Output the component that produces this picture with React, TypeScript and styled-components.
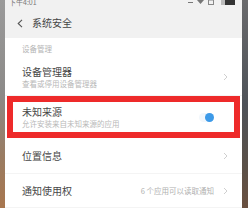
import React from "react";
import styled, { createGlobalStyle } from "styled-components";

const Global = createGlobalStyle`
  html, body { margin: 0; padding: 0; }
  body { font-family: "Noto Sans CJK SC", "Noto Sans", sans-serif; background: #fff; }
`;

const Frame = styled.div`
  display: flex;
  width: 248px;
  height: 208px;
  overflow: hidden;
`;

const LeftEdge = styled.div`
  width: 5px;
  flex: none;
  background: linear-gradient(180deg, #9a9a9a 0%, #8c8a88 45%, #9a7c62 75%, #a8764e 100%);
`;

const RightEdge = styled.div`
  width: 6px;
  flex: none;
  background: linear-gradient(180deg, #6a6a6c 0%, #4e5258 50%, #5a5048 80%, #6a5040 100%);
`;

const Screen = styled.div`
  flex: 1;
  display: flex;
  flex-direction: column;
  background: #fff;
  overflow: hidden;
`;

const StatusBar = styled.div`
  height: 8px;
  flex: none;
  display: flex;
  justify-content: space-between;
  align-items: flex-start;
  padding: 0 6px 0 4px;
  background: #f1f1f1;
  overflow: hidden;
`;

const StatusTime = styled.span`
  font-size: 7px;
  line-height: 8px;
  margin-top: -2px;
  color: #777;
`;

const Header = styled.div`
  height: 30px;
  flex: none;
  display: flex;
  align-items: center;
  gap: 9px;
  padding-left: 12px;
  background: #f1f1f1;
`;

const Title = styled.span`
  font-size: 10px;
  color: #444;
  line-height: 12px;
`;

const SectionLabel = styled.div`
  height: 24px;
  box-sizing: border-box;
  padding: 5px 0 0 17px;
  font-size: 7.5px;
  line-height: 12px;
  color: #b4b4b4;
`;

const Row = styled.div<{ $h: number; $boxed?: boolean }>`
  height: ${(p) => p.$h}px;
  flex: none;
  box-sizing: border-box;
  display: flex;
  align-items: center;
  padding: ${(p) => (p.$boxed ? "0 20px 0 9px" : "0 14px 0 17px")};
  margin: ${(p) => (p.$boxed ? "0 2px" : "0")};
  border: ${(p) => (p.$boxed ? "6px solid #ee2a2a" : "none")};
  border-bottom: ${(p) => (p.$boxed ? "6px solid #ee2a2a" : "1px solid #f4f4f4")};
`;

const Texts = styled.div`
  flex: 1;
  display: flex;
  flex-direction: column;
`;

const RowTitle = styled.span`
  font-size: 10px;
  line-height: 13px;
  color: #474747;
`;

const RowSub = styled.span`
  font-size: 7.5px;
  line-height: 11px;
  color: #b8b8b8;
  white-space: nowrap;
`;

const RowValue = styled.span`
  font-size: 7.5px;
  color: #b0b0b0;
  margin-right: 9px;
  white-space: nowrap;
`;

const Toggle = styled.div`
  width: 15px;
  height: 9px;
  border-radius: 5px;
  background: #f2f7fc;
  display: flex;
  justify-content: flex-end;
  align-items: center;
`;

const Knob = styled.div`
  width: 9px;
  height: 9px;
  border-radius: 50%;
  background: #3d9ae8;
`;

const Chevron = () => (
  <svg width="5" height="8" viewBox="0 0 5 8">
    <path d="M1 1 L4 4 L1 7" fill="none" stroke="#cfcfcf" strokeWidth="1" />
  </svg>
);

const Back = () => (
  <svg width="6" height="9" viewBox="0 0 6 9">
    <path d="M5 0.8 L1.2 4.5 L5 8.2" fill="none" stroke="#555" strokeWidth="1.1" />
  </svg>
);

const StatusIcons = () => (
  <svg width="48" height="6" viewBox="0 0 48 6">
    <rect x="0" y="2" width="5" height="1" fill="#777" />
    <path d="M9 0 L16 0 L12.5 4 Z" fill="#777" />
    <rect x="20.5" y="0" width="5" height="4.5" fill="none" stroke="#888" strokeWidth="1" />
    <rect x="33" y="0" width="4" height="5" fill="#bbb" />
    <rect x="37" y="0" width="10" height="5" fill="#333" />
  </svg>
);

export default function App() {
  return (
    <>
      <Global />
      <Frame>
        <LeftEdge />
        <Screen>
          <StatusBar>
            <StatusTime>下午4:01</StatusTime>
            <StatusIcons />
          </StatusBar>
          <Header>
            <Back />
            <Title>系统安全</Title>
          </Header>
          <SectionLabel>设备管理</SectionLabel>
          <Row $h={37}>
            <Texts>
              <RowTitle>设备管理器</RowTitle>
              <RowSub>查看或停用设备管理器</RowSub>
            </Texts>
            <Chevron />
          </Row>
          <Row $h={42} $boxed>
            <Texts>
              <RowTitle>未知来源</RowTitle>
              <RowSub>允许安装来自未知来源的应用</RowSub>
            </Texts>
            <Toggle>
              <Knob />
            </Toggle>
          </Row>
          <Row $h={36}>
            <Texts>
              <RowTitle>位置信息</RowTitle>
            </Texts>
            <Chevron />
          </Row>
          <Row $h={34}>
            <Texts>
              <RowTitle>通知使用权</RowTitle>
            </Texts>
            <RowValue>6 个应用可以读取通知</RowValue>
            <Chevron />
          </Row>
        </Screen>
        <RightEdge />
      </Frame>
    </>
  );
}
